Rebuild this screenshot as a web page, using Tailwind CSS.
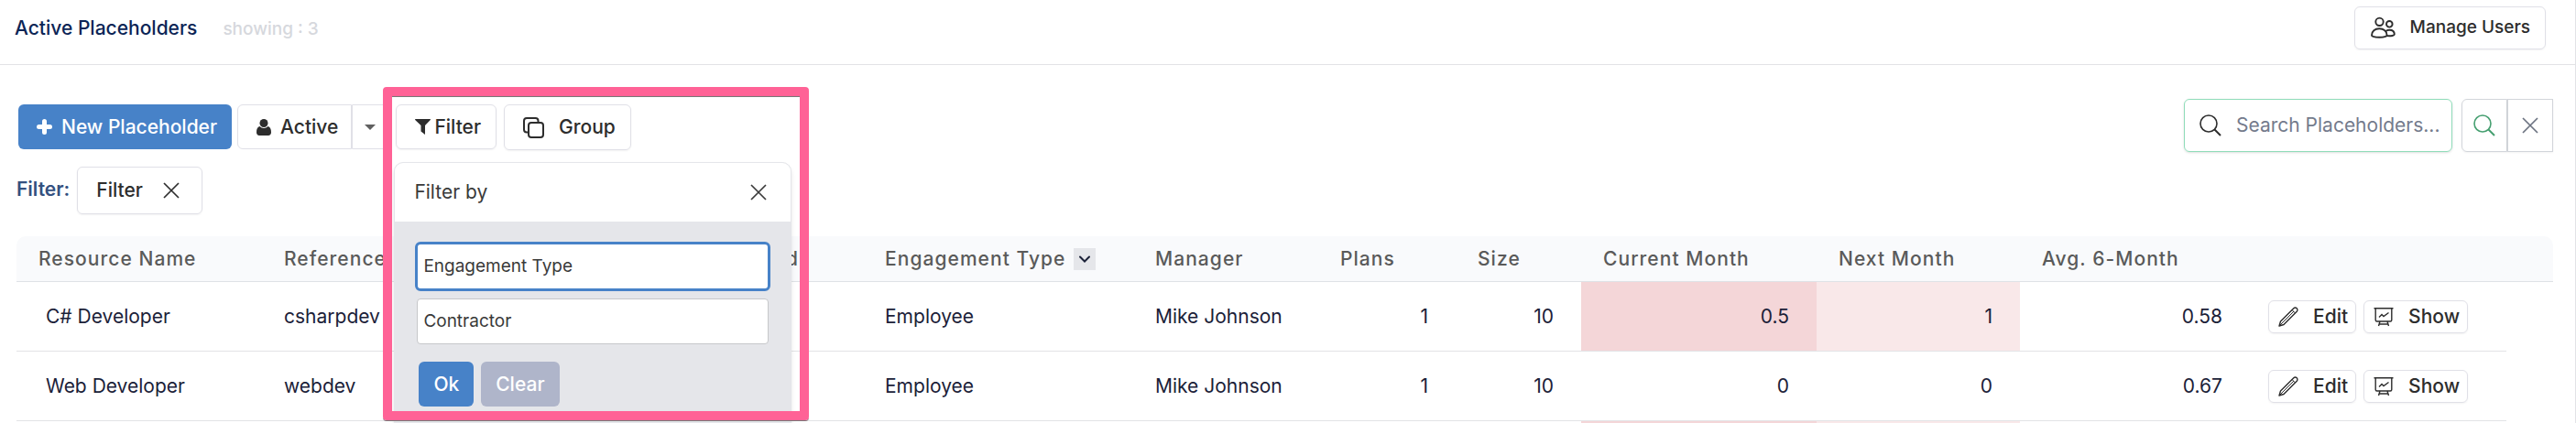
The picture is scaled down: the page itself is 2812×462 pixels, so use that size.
<!DOCTYPE html>
<html lang="en">
  <head>
    <meta charset="UTF-8" />
    <title>Active Placeholders</title>
    <meta name="viewport" content="width=device-width, initial-scale=1.0" />
    <script src="https://cdn.jsdelivr.net/npm/@tailwindcss/browser@4"></script>
  </head>
  <body class="h-screen overflow-hidden bg-white font-['Inter',sans-serif] text-[21px] text-[#2d2d2d]">
    <!-- icons shared by several buttons -->
    <svg class="hidden">
      <symbol id="icon-close" viewBox="0 0 18 18">
        <path d="M1 1l16 16M17 1L1 17" fill="none" stroke="currentColor" stroke-width="1.7" />
      </symbol>
      <symbol id="icon-search" viewBox="0 0 24 24">
        <circle cx="10" cy="10" r="9" fill="none" stroke="currentColor" stroke-width="1.6" />
        <path d="M16.5 16.5l6.5 6.5" fill="none" stroke="currentColor" stroke-width="2" />
      </symbol>
      <symbol id="icon-edit" viewBox="0 0 22 22">
        <g fill="none" stroke="currentColor" stroke-width="1.4" stroke-linejoin="round">
          <path d="M1 21l1.500-5L16.800 1.800a2.100 2.100 0 0 1 3.400 3.400L6 19.500z" />
          <path d="M15 3.500L18.500 7M1.200 20.800L17 5" stroke-width="1" />
        </g>
      </symbol>
      <symbol id="icon-show" viewBox="0 0 22 22">
        <g fill="none" stroke="currentColor" stroke-width="1.4">
          <path d="M.5 1.700h21M2.200 1.700v12.800a1.500 1.500 0 0 0 1.500 1.500h14.600a1.500 1.500 0 0 0 1.500-1.500V1.700" />
          <path d="M6 11.500l3-3 2 2 5.500-4M7 16l-1.500 5M15 16l1.500 5M6.500 19h9" />
        </g>
      </symbol>
    </svg>

    <div class="relative min-h-screen border-r border-[#e2e3e6]">
      <header class="flex h-[71px] items-start justify-between border-b border-[#e2e3e6] pr-8 pl-4">
        <div class="flex items-baseline gap-7 pt-4">
          <h1 class="leading-[30px] font-medium text-[#0c2556]">Active Placeholders</h1>
          <span class="text-[19px] font-medium text-[#d6d8dd]">showing : 3</span>
        </div>
        <button class="mt-[7px] flex h-[47px] items-center gap-4 rounded-md border border-[#e0e0e7] px-4 text-[19px] font-medium shadow-xs">
          <svg class="h-7 w-7" viewBox="0 0 28 28" fill="none" stroke="currentColor" stroke-width="1.9">
            <circle cx="10.500" cy="6.800" r="4.200" />
            <circle cx="21.300" cy="9.300" r="3.300" />
            <path d="M2 21.500c0-4.300 3.500-7.200 8.300-7.200s8.300 2.900 8.300 7.200c0 1.200-3.600 2.200-8.300 2.200S2 22.700 2 21.500z" />
            <path d="M17 17.300c1-1 2.500-1.600 4.300-1.600 3.300 0 5.500 1.800 5.500 4.900 0 1.100-3.500 2-8.300 1.500" />
          </svg>
          Manage Users
        </button>
      </header>

      <main class="px-6 pt-[37px] pl-[18px]">
        <div class="flex items-start justify-between">
          <div class="flex pt-1.5 pl-0.5">
            <button class="mr-1.5 flex h-[49px] items-center gap-2.5 rounded-md bg-[#4782c8] pr-4 pl-5 font-medium text-white">
              <svg class="h-[17px] w-[17px]" viewBox="0 0 17 17"><path d="M8.500 2.500v12M2.500 8.500h12" fill="none" stroke="currentColor" stroke-width="5" stroke-linecap="round" /></svg>
              New Placeholder
            </button>
            <button class="flex h-[49px] items-center gap-2.5 rounded-l-md border border-[#e0e0e7] pr-3.5 pl-5 font-medium">
              <svg class="h-[18px] w-4" viewBox="0 0 16 18" fill="currentColor">
                <circle cx="8" cy="4.500" r="4.500" />
                <path d="M3.500 8C6 10.500 10 10.500 12.500 8 15 8.500 16 11 16 14.500c0 2.200-1.300 3.500-3 3.500H3c-1.700 0-3-1.300-3-3.500C0 11 1 8.500 3.500 8z" />
              </svg>
              Active
            </button>
            <button aria-label="More states" class="mr-2 flex h-[49px] w-10 items-center justify-center rounded-r-md border border-[#e0e0e7] text-[#606060]">
              <svg class="h-1.5 w-3" viewBox="0 0 12 6" fill="currentColor"><path d="M0 0h12L6 6z" /></svg>
            </button>
            <div class="relative mr-2">
              <button class="flex h-[49px] items-center gap-1 rounded-md border border-[#e0e0e7] pr-4 pl-5 font-medium shadow-xs">
                <svg class="h-[17px] w-[17px]" viewBox="0 0 17 17" fill="currentColor"><path d="M.5 0h16c.5 0 .6.600.3 1L11 7v10l-4.500-3.500V7L.2 1C-.1.600 0 0 .5 0z" /></svg>
                Filter
              </button>
              <section class="absolute top-[63px] -left-0.5 z-10 w-[434px] overflow-hidden rounded-[10px] border border-[#e5e6ea] bg-[#e5e6ea] shadow-md">
                <div class="flex h-16 items-center justify-between bg-white pr-[26px] pl-[21px] text-[#3a3a3a]">
                  Filter by
                  <button aria-label="Close"><svg class="h-[18px] w-[18px]"><use href="#icon-close" /></svg></button>
                </div>
                <div class="flex flex-col gap-2 px-[22px] pt-[22px] pb-8 text-[19px] text-[#3a3a3a]">
                  <select aria-label="Filter field" class="h-[54px] appearance-none rounded-md border-3 border-[#4782c8] bg-white px-1.5 outline-none"><option>Engagement Type</option></select>
                  <select aria-label="Filter value" class="mx-0.5 h-[50px] appearance-none rounded border border-[#c6c7ca] bg-white px-1.5"><option>Contractor</option></select>
                  <div class="mt-[11px] flex gap-2 px-1 text-[21px] font-medium text-white">
                    <button class="h-[49px] rounded-md bg-[#4782c8] px-4">Ok</button>
                    <button class="h-[49px] rounded-md bg-[#afb5ca] px-4">Clear</button>
                  </div>
                </div>
              </section>
            </div>
            <button class="flex h-[50px] items-center gap-4 rounded-md border border-[#e0e0e7] pr-4 pl-5 font-medium shadow-xs">
              <svg class="h-[23px] w-[23px]" viewBox="0 0 23 23" fill="none" stroke="currentColor" stroke-width="2">
                <rect x="6" y="6" width="16" height="16" rx="3" />
                <path d="M6 16.500H4a3 3 0 0 1-3-3V4a3 3 0 0 1 3-3h9.500a3 3 0 0 1 3 3v2" />
              </svg>
              Group
            </button>
          </div>

          <div class="flex">
            <label class="mr-2.5 flex h-[58px] w-[293px] items-center gap-4 rounded-md border border-[#8fdcb9] pr-3 pl-4 shadow-sm">
              <svg class="h-6 w-6 shrink-0"><use href="#icon-search" /></svg>
              <input type="text" aria-label="Search placeholders" placeholder="Search Placeholders..." class="w-full min-w-0 outline-none placeholder:text-[#747b8c]" />
            </label>
            <button aria-label="Search" class="flex h-[58px] w-[50px] items-center justify-center rounded-l-md border border-[#d2d5da] text-[#459f70] shadow-xs"><svg class="h-6 w-6"><use href="#icon-search" /></svg></button>
            <button aria-label="Clear search" class="flex h-[58px] w-[50px] items-center justify-center border border-[#d2d5da] text-[#6b7280] shadow-xs"><svg class="h-[18px] w-[18px]"><use href="#icon-close" /></svg></button>
          </div>
        </div>

        <div class="mt-4 mb-6 flex gap-2">
          <span class="pt-2.5 leading-[30px] font-semibold text-[#34507f]">Filter:</span>
          <button class="flex h-[52px] items-center gap-[22px] rounded-md border border-[#e0e0e7] pr-6 pl-5 font-medium shadow-xs">
            Filter
            <svg class="h-[18px] w-[18px]"><use href="#icon-close" /></svg>
          </button>
        </div>

        <table class="w-full table-fixed border-separate border-spacing-0 text-[#1b2138]">
          <colgroup>
            <col class="w-[268px]" />
            <col class="w-[280px]" />
            <col />
            <col class="w-[295px]" />
            <col class="w-[202px]" />
            <col class="w-[150px]" />
            <col class="w-[137px]" />
            <col class="w-[257px]" />
            <col class="w-[222px]" />
            <col class="w-[251px]" />
            <col class="w-[280px]" />
            <col class="w-[51px]" />
          </colgroup>
          <thead class="text-left tracking-wider text-[#5a5a5a] [&_th]:h-[50px] [&_th]:border-b [&_th]:border-[#dfe2e6] [&_th]:bg-[#f9fafc] [&_th]:px-6 [&_th]:font-medium [&_th]:whitespace-nowrap">
            <tr>
              <th class="rounded-tl-[10px]">Resource Name</th>
              <th>Reference</th>
              <th><div class="pr-[46px] text-right">Required</div></th>
              <th>
                <div class="flex items-center gap-2">
                  Engagement Type
                  <button aria-label="Column menu" class="flex h-6 w-6 items-center justify-center bg-[#e5e6ea] text-[#1b2138]">
                    <svg class="h-3 w-3" viewBox="0 0 12 12"><path d="M1 3.500l5 5 5-5" fill="none" stroke="currentColor" stroke-width="2" stroke-linecap="round" /></svg>
                  </button>
                </div>
              </th>
              <th>Manager</th>
              <th>Plans</th>
              <th>Size</th>
              <th>Current Month</th>
              <th>Next Month</th>
              <th>Avg. 6-Month</th>
              <th></th>
              <th class="rounded-tr-[10px]"></th>
            </tr>
          </thead>
          <tbody class="[&_td]:h-[76px] [&_td]:border-b [&_td]:border-[#e2e3e6]">
            <tr>
              <td class="pl-8">C# Developer</td>
              <td class="pl-6">csharpdev</td>
              <td></td>
              <td class="pl-6">Employee</td>
              <td class="pl-6">Mike Johnson</td>
              <td class="pr-[30px] text-right">1</td>
              <td class="pr-[30px] text-right">10</td>
              <td class="bg-[#f4d6d8] pr-[30px] text-right">0.5</td>
              <td class="bg-[#f9e8e9] pr-[30px] text-right">1</td>
              <td class="pr-[30px] text-right">0.58</td>
              <td class="pl-5">
                <div class="flex gap-2 font-medium text-[#2d2d2d]">
                  <button class="flex h-9 items-center gap-4 rounded-md border border-[#e0e0e7] px-2 pl-2.5 shadow-xs"><svg class="h-[22px] w-[22px]"><use href="#icon-edit" /></svg>Edit</button>
                  <button class="flex h-9 items-center gap-4 rounded-md border border-[#e0e0e7] px-2 pl-2.5 shadow-xs"><svg class="h-[22px] w-[22px]"><use href="#icon-show" /></svg>Show</button>
                </div>
              </td>
            </tr>
            <tr>
              <td class="pl-8">Web Developer</td>
              <td class="pl-6">webdev</td>
              <td></td>
              <td class="pl-6">Employee</td>
              <td class="pl-6">Mike Johnson</td>
              <td class="pr-[30px] text-right">1</td>
              <td class="pr-[30px] text-right">10</td>
              <td class="pr-[30px] text-right">0</td>
              <td class="pr-[30px] text-right">0</td>
              <td class="pr-[30px] text-right">0.67</td>
              <td class="pl-5">
                <div class="flex gap-2 font-medium text-[#2d2d2d]">
                  <button class="flex h-9 items-center gap-4 rounded-md border border-[#e0e0e7] px-2 pl-2.5 shadow-xs"><svg class="h-[22px] w-[22px]"><use href="#icon-edit" /></svg>Edit</button>
                  <button class="flex h-9 items-center gap-4 rounded-md border border-[#e0e0e7] px-2 pl-2.5 shadow-xs"><svg class="h-[22px] w-[22px]"><use href="#icon-show" /></svg>Show</button>
                </div>
              </td>
            </tr>
            <tr>
              <td colspan="7"></td>
              <td class="bg-[#f4d6d8]"></td>
              <td class="bg-[#f9e8e9]"></td>
              <td colspan="2"></td>
            </tr>
          </tbody>
        </table>
      </main>

      <!-- highlight around the filter menu -->
      <div class="pointer-events-none absolute top-[95px] left-[418px] z-20 h-[364px] w-[465px] rounded border-10 border-[#ff6296] shadow-[0_1px_0_#777,inset_0_1px_0_#777]"></div>
    </div>
  </body>
</html>
